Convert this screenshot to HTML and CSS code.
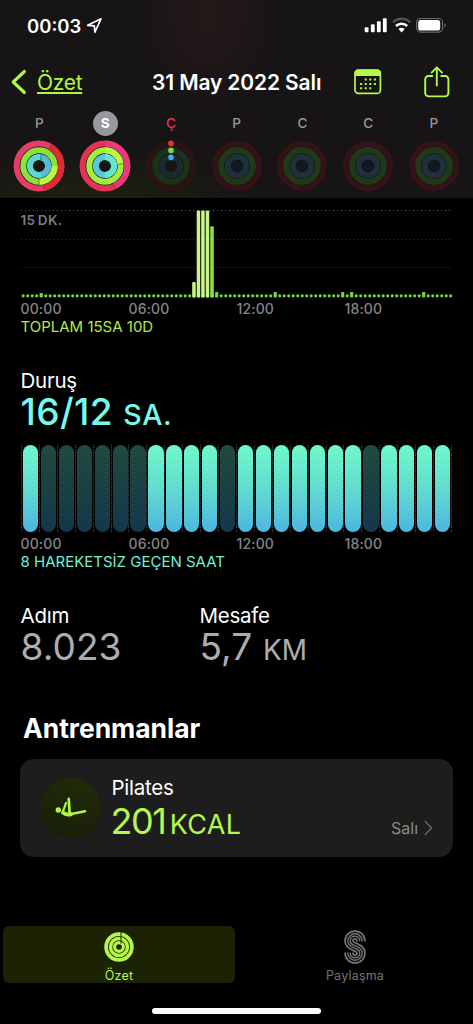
FILE: index.html
```html
<!DOCTYPE html>
<html lang="tr">
<head>
    <meta charset="UTF-8">
    <meta name="viewport" content="width=device-width,initial-scale=1">
    <title>Fitness - Özet</title>
    <link rel="stylesheet" href="styles.css">
</head>
<body>

<!-- Shared ring shapes -->
<svg class="defs" aria-hidden="true">
    <defs>
        <symbol id="rings-idle" viewBox="0 0 52 52">
            <g fill="none" stroke-width="6">
                <circle cx="26" cy="26" r="22.2" stroke="#341217" stroke-width="5.6"/>
                <circle cx="26" cy="26" r="15.9" stroke="#203a18"/>
                <circle cx="26" cy="26" r="9.3" stroke="#1d313c"/>
            </g>
            <circle cx="26" cy="26" r="6.2" fill="#131820"/>
        </symbol>
    </defs>
</svg>

<header>
    <div class="status">
        <span class="clock">00:03</span>
        <svg class="location" width="17" height="17" viewBox="0 0 17 17">
            <path d="M1.7 8.3 15 1.8 8.9 15.2 8.3 8.8Z" fill="none" stroke="#fff" stroke-width="1.7" stroke-linejoin="round"/>
        </svg>
        <svg class="signals" width="84" height="18" viewBox="0 0 84 18">
            <g fill="#fff">
                <rect x=".7" y="10.2" width="3.8" height="5" rx="1"/>
                <rect x="6.9" y="7.2" width="3.8" height="8" rx="1"/>
                <rect x="12.9" y="4.2" width="3.8" height="11" rx="1"/>
                <rect x="18.9" y="1.2" width="3.8" height="14" rx="1"/>
            </g>
            <g fill="none" stroke-width="2.5">
                <path d="M29 5.4a12.2 12.2 0 0 1 17.2 0" stroke="#555354"/>
                <path d="M32 9a8 8 0 0 1 11.2 0" stroke="#fff"/>
            </g>
            <path d="M37.6 15.4 34.5 12.1a4.4 4.4 0 0 1 6.2 0Z" fill="#fff"/>
            <rect x="52.6" y="1.5" width="26" height="13.6" rx="4" fill="none" stroke="#6b696a" stroke-width="1.2"/>
            <rect x="54.2" y="3.1" width="22" height="10.4" rx="2.6" fill="#fff"/>
            <path d="M80.5 6v4.6a2.6 2.6 0 0 0 0-4.6Z" fill="#6b696a"/>
        </svg>
    </div>

    <nav class="nav">
        <a class="back" href="#">
            <svg width="16" height="26" viewBox="0 0 16 26">
                <path d="M13.4 2.5 2.2 13l11.2 10.5" fill="none" stroke="#b0f83e" stroke-width="3.1" stroke-linecap="round" stroke-linejoin="round"/>
            </svg>
            <span>Özet</span>
        </a>
        <h1>31 May 2022 Salı</h1>
        <svg class="calendar" width="28" height="26" viewBox="0 0 28 26">
            <rect x="1" y="1" width="25.4" height="23.4" rx="3.4" fill="none" stroke="#b4f84a" stroke-width="1.7"/>
            <path d="M.6 7V4.2A3.8 3.8 0 0 1 4.4.4H23a3.8 3.8 0 0 1 3.8 3.8V7Z" fill="#b4f84a"/>
            <g stroke="#b4f84a" stroke-width="2" stroke-dasharray="2 2.6">
                <path d="M10.7 10.4h11.4M6.1 15h16M6.1 19.2h11.4"/>
            </g>
        </svg>
        <svg class="share" width="26" height="32" viewBox="0 0 26 32">
            <g fill="none" stroke="#b4f84a" stroke-width="1.9" stroke-linecap="round" stroke-linejoin="round">
                <path d="M8.3 10H4.6A3.4 3.4 0 0 0 1.2 13.4V27A3.4 3.4 0 0 0 4.6 30.4H21A3.4 3.4 0 0 0 24.4 27V13.4A3.4 3.4 0 0 0 21 10h-3.7"/>
                <path d="M12.8 19.6V1.6M7.6 6.6l5.2-5.2L18 6.6"/>
            </g>
        </svg>
    </nav>

    <div class="week">
        <div class="day">
            <span>P</span>
            <svg width="52" height="52" viewBox="0 0 52 52">
                <circle cx="26" cy="26" r="25.4" fill="#14170f"/>
                <g fill="none" stroke-width="6">
                    <circle cx="26" cy="26" r="22.4" stroke="#e63c67"/>
                    <path d="M37.2 6.6A22.4 22.4 0 0 1 30 48" stroke="#dc2c38"/>
                    <circle cx="26" cy="26" r="15.7" stroke="#8be23d"/>
                    <path d="M41.7 26A15.7 15.7 0 0 1 26 41.7" stroke="#bafa45"/>
                    <circle cx="26" cy="26" r="9.1" stroke="#5ad8d4"/>
                    <path d="M28 17.1A9.1 9.1 0 0 1 28 34.9" stroke="#58b9df"/>
                </g>
                <g stroke="#26381a" stroke-width=".8" opacity=".7"><path d="M36 9.2l3-5M26 38.8v5.8M28 20v-5.8"/></g>
            </svg>
        </div>
        <div class="day selected">
            <span>S</span>
            <svg width="52" height="52" viewBox="0 0 52 52">
                <circle cx="26" cy="26" r="25.4" fill="#14170f"/>
                <g fill="none" stroke-width="6">
                    <circle cx="26" cy="26" r="22.4" stroke="#e23357"/>
                    <path d="M26 3.6A22.4 22.4 0 0 1 35 46.5" stroke="#e83a7b"/>
                    <circle cx="26" cy="26" r="15.7" stroke="#a0ee40"/>
                    <path d="M26 10.3A15.7 15.7 0 0 1 41.6 24" stroke="#b8f943"/>
                    <circle cx="26" cy="26" r="9.1" stroke="#5ac8dc"/>
                    <path d="M26 16.9A9.1 9.1 0 0 1 26 35.1" stroke="#66e5d0"/>
                </g>
                <g stroke="#26381a" stroke-width=".8" opacity=".7"><path d="M34 43.5l2.2 5.2M39 24.2l5.6-.6"/></g>
            </svg>
        </div>
        <div class="day today">
            <span>Ç</span>
            <svg width="52" height="52" viewBox="0 0 52 52">
                <g fill="none" stroke-width="6">
                    <circle cx="26" cy="26" r="22.4" stroke="#2a1314"/>
                    <circle cx="26" cy="26" r="15.7" stroke="#1b3118"/>
                    <circle cx="26" cy="26" r="9.1" stroke="#182a32"/>
                </g>
                <circle cx="26" cy="3.4" r="2.8" fill="#e63037"/>
                <circle cx="26" cy="10.4" r="2.8" fill="#78d944"/>
                <circle cx="26" cy="17.4" r="2.8" fill="#45a9dc"/>
            </svg>
        </div>
        <div class="day"><span>P</span><svg width="52" height="52"><use href="#rings-idle"/></svg></div>
        <div class="day"><span>C</span><svg width="52" height="52"><use href="#rings-idle"/></svg></div>
        <div class="day"><span>C</span><svg width="52" height="52"><use href="#rings-idle"/></svg></div>
        <div class="day"><span>P</span><svg width="52" height="52"><use href="#rings-idle"/></svg></div>
    </div>
</header>

<main>
    <!-- Exercise minutes -->
    <section>
        <svg class="exercise-chart" width="432" height="101" viewBox="0 0 432 101">
            <g stroke-dasharray="1 3" stroke-width="1">
                <path d="M0 12.5h431" stroke="#636363"/>
                <path d="M0 41.5h431M0 69.5h431" stroke="#353535"/>
            </g>
            <text x="-.5" y="26.5">15 DK.</text>
            <path d="M2.2 97.8h428" stroke="#72d744" stroke-width="3.2" stroke-linecap="round" stroke-dasharray="0 4.5"/>
            <g stroke="#72d744" stroke-width="3">
                <path d="M20.2 95v4.3M195.7 94v5.3M254.2 94v5.3M321.7 94v5.3M330.7 94v5.3M402.7 94v5.3"/>
            </g>
            <g fill="#c9f58c">
                <rect x="171.2" y="84" width="3.5" height="15.4" rx="1"/>
                <rect x="175.7" y="12.5" width="3.5" height="87" rx="1"/>
                <rect x="180.2" y="12.5" width="3.5" height="87" rx="1"/>
                <rect x="184.7" y="12.5" width="3.5" height="87" rx="1"/>
            </g>
            <rect x="189.2" y="28.2" width="3.6" height="71.2" rx="1" fill="#89df4b"/>
        </svg>
        <div class="axis"><span>00:00</span><span>06:00</span><span>12:00</span><span>18:00</span></div>
        <p class="total exercise">TOPLAM 15SA 10D</p>
    </section>

    <!-- Stand hours -->
    <section class="stand">
        <h2 class="label">Duruş</h2>
        <p class="value">16/12 <small>SA.</small></p>
        <div class="hours">
            <i class="on"></i><i></i><i></i><i></i><i></i><i></i>
            <i></i><i class="on"></i><i class="on"></i><i class="on"></i><i class="on"></i><i></i>
            <i class="on"></i><i class="on"></i><i class="on"></i><i class="on"></i><i class="on"></i><i class="on"></i>
            <i class="on"></i><i></i><i class="on"></i><i class="on"></i><i class="on"></i><i class="on"></i>
        </div>
        <div class="axis"><span>00:00</span><span>06:00</span><span>12:00</span><span>18:00</span></div>
        <p class="total idle">8 HAREKETSİZ GEÇEN SAAT</p>
    </section>

    <section class="stats">
        <div>
            <h2 class="label">Adım</h2>
            <p class="value">8.023</p>
        </div>
        <div>
            <h2 class="label">Mesafe</h2>
            <p class="value">5,7 <small>KM</small></p>
        </div>
    </section>

    <!-- Workouts -->
    <section class="workouts">
        <h2>Antrenmanlar</h2>
        <a class="card" href="#">
            <span class="badge">
                <svg width="32" height="22" viewBox="0 0 32 22">
                    <circle cx="3.3" cy="14" r="2.7" fill="#b0f83e"/>
                    <g fill="none" stroke="#b0f83e" stroke-linecap="round" stroke-linejoin="round">
                        <path d="M8 16.6c2 1.9 5.3 2.2 8 1.6" stroke-width="4"/>
                        <path d="M15 18.2 30 15.2" stroke-width="2.5"/>
                        <path d="M13.7 2.8l.9 13.2" stroke-width="2.7"/>
                        <path d="M8 15.4 11 7" stroke-width="2.2"/>
                    </g>
                </svg>
            </span>
            <span class="info">
                <span class="name">Pilates</span>
                <span class="kcal">201<small>KCAL</small></span>
            </span>
            <span class="when">Salı
                <svg width="9" height="16" viewBox="0 0 9 16"><path d="M1.2 1.5 7.5 8l-6.3 6.5" fill="none" stroke="#5f5f61" stroke-width="1.7" stroke-linecap="round"/></svg>
            </span>
        </a>
    </section>
</main>

<footer>
    <div class="tabs">
        <a class="tab active" href="#">
            <svg width="30" height="30" viewBox="0 0 30 30">
                <g fill="none" stroke="#b4f84a">
                    <circle cx="15" cy="15" r="12.9" stroke-width="3.7"/>
                    <circle cx="15" cy="15" r="8.5" stroke-width="3.5"/>
                    <circle cx="15" cy="15" r="4.4" stroke-width="3.2"/>
                </g>
                <path d="M17 0v11.5" stroke="#1b2304" stroke-width="1"/>
            </svg>
            <span>Özet</span>
        </a>
        <a class="tab" href="#">
            <svg width="22" height="34" viewBox="0 0 22 34">
                <g fill="none" stroke="#747474">
                    <path d="M17 11.5V11A6 6 0 0 0 5 11C5 18 17 16 17 23A6 6 0 0 1 5 23V22.5" stroke-width="9.6"/>
                    <path d="M17 12V11A6 6 0 0 0 5 11C5 18 17 16 17 23A6 6 0 0 1 5 23V22" stroke="#000" stroke-width="6.2"/>
                    <path d="M17 11.5V11A6 6 0 0 0 5 11C5 18 17 16 17 23A6 6 0 0 1 5 23V22.5" stroke-width="3.8"/>
                    <path d="M17 12V11A6 6 0 0 0 5 11C5 18 17 16 17 23A6 6 0 0 1 5 23V22" stroke="#000" stroke-width="1"/>
                </g>
            </svg>
            <span>Paylaşma</span>
        </a>
    </div>
    <div class="home"></div>
</footer>
</body>
</html>
```
FILE: styles.css
```css
:root{
    --c-bg:#000;
    --c-green:#b4f84a;
    --c-cyan:#74fbec;
    --c-muted:#858588;
    --c-value:#acacb2;
}
*{box-sizing:border-box;margin:0;padding:0}
body{background:var(--c-bg);color:#fff;font-family:Inter,"Liberation Sans",sans-serif;width:473px;height:1024px;overflow:hidden}
a{color:inherit;text-decoration:none}
svg{display:block;flex:none}
.defs{width:0;height:0;position:absolute}
h1,h2{font-weight:400}

/* Header */
header{
    height:198px;
    background:
        radial-gradient(ellipse 75px 100px at 208px 15px,#261819,transparent),
        radial-gradient(ellipse 170px 50px at 95px 198px,#1d210f,transparent),
        #161415;
}
.status{display:flex;align-items:center;height:50px;padding:1px 25px 0 27px}
.clock{font-size:18.5px;font-weight:600}
.location{margin-left:5px}
.signals{margin:0 0 0 auto}
.nav{display:flex;align-items:center;height:61px;padding:3px 23px 0 11px}
.back{display:flex;align-items:center;gap:10px;width:141px;color:#b0f83e;font-size:21px;letter-spacing:-.3px}
.back span{text-decoration:underline;text-decoration-thickness:1.5px;text-underline-offset:2px}
.nav h1{font-size:21px;font-weight:600;letter-spacing:-.13px;white-space:nowrap;width:202px}
.share{margin-left:auto}
.week{display:grid;grid-template-columns:repeat(7,65.75px);padding-left:6.5px}
.day{display:flex;flex-direction:column;align-items:center;gap:4px}
.day span{
    width:25px;height:25px;border-radius:50%;line-height:25px;text-align:center;
    font-size:13.5px;font-weight:500;color:#9a9899;
}
.day.selected span{background:#98979b;color:#fff;font-weight:700}
.day.today span{color:#e92f60}

/* Charts */
main{padding:0 20px}
section{padding-left:1px}
.exercise-chart text{font-size:13.5px;font-weight:600;fill:#7c7c7f;letter-spacing:.4px;word-spacing:-1.5px}
.axis{display:grid;grid-template-columns:repeat(4,108px);height:19px;margin-left:-.5px;font-size:14px;line-height:20px;font-weight:500;letter-spacing:.15px;color:var(--c-muted)}
.total{height:16px;margin-left:-.5px;font-size:15px;line-height:17px;white-space:nowrap}
.exercise{color:#b2ea48}
.idle{color:#6ff2d4}
.label{margin-left:-.5px;font-size:20.5px;line-height:24px;letter-spacing:-.25px}
.value{height:36px;margin-left:-.5px;font-size:37px;line-height:38px;white-space:nowrap}
.value small{font-size:28px;line-height:1px}
.stand{margin-top:35px}
.stand .value{color:var(--c-cyan);font-weight:500;letter-spacing:.4px}
.stand .value small{font-size:28.5px;letter-spacing:.6px}
.hours{display:grid;grid-template-columns:repeat(24,1fr);width:431px;height:87px;margin:16px 0 2px;border-right:1px dotted #285b57}
.hours i{padding:0 .7px 0 1px;border-left:1px dotted #285b57}
.hours i::before{content:"";display:block;height:87px;border-radius:8px;background:linear-gradient(#214a3e,#14374a)}
.hours .on::before{background:linear-gradient(#70f8cc,#62dcd0 50%,#4db5e0)}
.stats{display:grid;grid-template-columns:179px 1fr;margin-top:35px}
.stats .value{color:var(--c-value);letter-spacing:.1px}

/* Workouts */
.workouts{margin-top:48px;padding:0}
.workouts h2{padding-left:3px;font-size:26.5px;font-weight:700;line-height:32px;letter-spacing:-.05px}
.card{display:flex;height:98px;margin-top:15px;padding:0 20px 0 21px;background:#1d1d1d;border-radius:14px}
.badge{display:flex;align-items:center;justify-content:center;width:60px;height:60px;margin-top:19px;border-radius:50%;background:linear-gradient(20deg,#171d08,#232c0b)}
.badge svg{margin-top:-3px}
.info{display:flex;flex-direction:column;padding:17px 0 0 10.5px}
.name{font-size:20.5px;line-height:24px;letter-spacing:-.25px}
.kcal{height:44px;margin-left:-1px;font-size:36px;line-height:42px;letter-spacing:-1.5px;color:var(--c-green)}
.kcal small{margin-left:4.5px;font-size:27px;line-height:1px;letter-spacing:.3px}
.when{display:flex;align-items:center;gap:6px;height:20px;margin:59px 0 0 auto;font-size:16px;color:#8b8b8d}

/* Tab bar */
footer{margin-top:69px}
.tabs{display:grid;grid-template-columns:232px 232px;gap:4px;padding-left:3px}
.tab{display:flex;flex-direction:column;align-items:center;height:57px;color:#747474;font-size:12.5px;letter-spacing:.2px}
.tab svg{margin-top:4px}
.tab span{line-height:16px;margin-top:4px}
.tab.active{background:#1b2304;color:var(--c-green);border-radius:6px}
.tab.active svg{margin-top:6px}
.tab.active span{margin-top:6px}
.home{width:169px;height:6px;margin:25px auto 0;border-radius:3px;background:#fff}
```
